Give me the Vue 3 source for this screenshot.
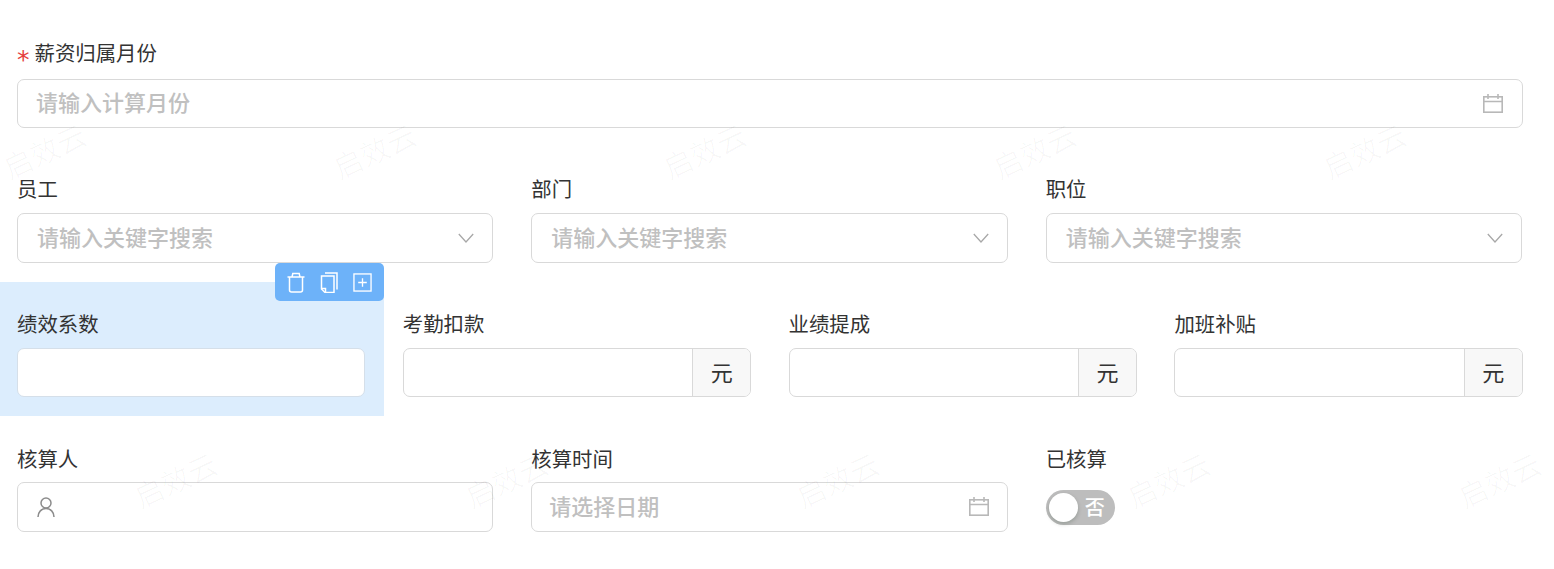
<script setup>
const watermarks = []
for (let i = 0; i < 5; i++) {
  watermarks.push({ x: 44 + i * 330, y: 150 })
  watermarks.push({ x: 175 + i * 331, y: 479 })
}

const staffFields = ['员工', '部门', '职位']
const moneyFields = ['考勤扣款', '业绩提成', '加班补贴']
</script>

<template>
  <div class="page">
    <div class="row row-month">
      <div class="field">
        <label class="label"><span class="required">*</span>薪资归属月份</label>
        <div class="control">
          <span class="placeholder ph-month">请输入计算月份</span>
          <svg class="icon-calendar" viewBox="0 0 20 19" fill="none" stroke="#b8b8b8" stroke-width="1.6">
            <rect x="0.8" y="2.8" width="18.4" height="15.4" />
            <path d="M0.8 7.500h18.400M5 0v5M15 0v5" />
          </svg>
        </div>
      </div>
    </div>

    <div class="row cols-3 row-staff">
      <div v-for="name in staffFields" :key="name" class="field">
        <label class="label">{{ name }}</label>
        <div class="control tall">
          <span class="placeholder ph-select">请输入关键字搜索</span>
          <svg class="icon-chevron" viewBox="0 0 16 10" fill="none" stroke="#a8a8a8" stroke-width="1.3">
            <path d="M0.8 1l7.2 8 7.2-8" />
          </svg>
        </div>
      </div>
    </div>

    <div class="row cols-4 row-money">
      <div class="field selected">
        <div class="toolbar">
          <svg viewBox="0 0 18 20" fill="none" stroke="#fff" stroke-width="1.5">
            <path d="M0.500 4.500h17M5 4.500l.8-3.500h6.400l.8 3.500M2.500 4.500v13a2 2 0 0 0 2 2h9a2 2 0 0 0 2-2v-13" />
          </svg>
          <svg viewBox="0 0 18 21" fill="none" stroke="#fff" stroke-width="1.5">
            <path d="M5 1h12v16.500M1.500 4h12.500v16.500h-9l-3.500-3.500z" />
            <path d="M1.500 16.500h4v4" />
          </svg>
          <svg class="icon-add" viewBox="0 0 20 20" fill="none" stroke="#fff" stroke-width="1.4">
            <rect x="1" y="1" width="18" height="18" />
            <path d="M10 5.500v9M5.500 10h9" />
          </svg>
        </div>
        <label class="label">绩效系数</label>
        <div class="control plain"></div>
      </div>
      <div v-for="name in moneyFields" :key="name" class="field">
        <label class="label">{{ name }}</label>
        <div class="control has-unit">
          <div class="unit">元</div>
        </div>
      </div>
    </div>

    <div class="row cols-3 row-check">
      <div class="field">
        <label class="label">核算人</label>
        <div class="control tall">
          <svg class="icon-user" viewBox="0 0 18 20" fill="none" stroke="#8c8c8c" stroke-width="1.5">
            <circle cx="9" cy="6" r="5" />
            <path d="M1 20c0-5 3.500-8.500 8-8.500s8 3.500 8 8.500" />
          </svg>
        </div>
      </div>
      <div class="field">
        <label class="label">核算时间</label>
        <div class="control tall">
          <span class="placeholder ph-date">请选择日期</span>
          <svg class="icon-calendar icon-date" viewBox="0 0 20 19" fill="none" stroke="#b8b8b8" stroke-width="1.6">
            <rect x="0.8" y="2.8" width="18.4" height="15.4" />
            <path d="M0.8 7.500h18.400M5 0v5M15 0v5" />
          </svg>
        </div>
      </div>
      <div class="field">
        <label class="label">已核算</label>
        <div class="switch">
          <span class="knob"></span>
          <span class="switch-text">否</span>
        </div>
      </div>
    </div>

    <div class="watermarks">
      <span
        v-for="(w, i) in watermarks"
        :key="i"
        class="watermark"
        :style="{ left: w.x + 'px', top: w.y + 'px' }"
      >启效云</span>
    </div>
  </div>
</template>

<style>
html, body {
  background: #fff;
  overflow: hidden;
}
</style>

<style scoped>
.page {
  position: relative;
  width: 1554px;
  height: 569px;
  padding: 41px 0 0 17px;
  box-sizing: border-box;
  font-family: "Noto Sans CJK SC", "Noto Sans", sans-serif;
  color: #333;
  overflow: hidden;
}

.row {
  display: grid;
  column-gap: 38px;
  width: 1506px;
}
.cols-3 {
  grid-template-columns: repeat(3, 1fr);
  width: 1505px;
}
.cols-4 {
  grid-template-columns: repeat(4, 1fr);
  column-gap: 37.35px;
  width: 1505.85px;
}

.row-month { height: 107px; }
.row-month .label { margin-bottom: 16px; }
.row-staff { height: 134px; padding-top: 29px; box-sizing: border-box; }
.row-staff .label { margin-bottom: 14px; }
.row-money { height: 134px; }
.row-check { height: 134px; padding-top: 31px; box-sizing: border-box; }
.row-check .label { margin-bottom: 13px; }

.field {
  position: relative;
  min-width: 0;
}

.label {
  display: block;
  height: 22px;
  line-height: 22px;
  font-size: 20.4px;
  margin-bottom: 14px;
  white-space: nowrap;
}
.required {
  font-family: "DejaVu Sans", sans-serif;
  color: #e53e3e;
  font-size: 25px;
  line-height: 1;
  margin-right: 5px;
  vertical-align: -7px;
}

.control {
  position: relative;
  display: flex;
  align-items: center;
  height: 49px;
  box-sizing: border-box;
  border: 1px solid #d9d9d9;
  border-radius: 7px;
  background: #fff;
}
.control.tall { height: 50px; }

.placeholder {
  color: #c0c0c0;
  font-size: 22px;
  font-weight: 500;
  line-height: 1;
  padding-bottom: 5px;
  white-space: nowrap;
}
.ph-month { margin-left: 18px; }
.ph-select { margin-left: 19px; }
.ph-date { margin-left: 17px; padding-bottom: 4px; }

.icon-calendar {
  position: absolute;
  right: 19px;
  top: 14px;
  width: 20px;
  height: 19px;
}
.icon-date { right: 18px; }
.icon-chevron {
  position: absolute;
  right: 18px;
  top: 19px;
  width: 16px;
  height: 10px;
}
.icon-user {
  margin-left: 19px;
  width: 18px;
  height: 20px;
}

.selected {
  margin: 0 -19px 0 -17px;
  padding: 30px 19px 19px 17px;
  height: 134px;
  box-sizing: border-box;
  background: #dcedfd;
}
.control.plain { border-color: #d5dfe9; }

.toolbar {
  position: absolute;
  top: -19px;
  right: 0;
  display: flex;
  align-items: center;
  gap: 15px;
  width: 109px;
  height: 38px;
  padding-left: 12px;
  box-sizing: border-box;
  background: #6db2f9;
  border-radius: 5px;
}
.toolbar svg {
  width: 18px;
  height: 21px;
  flex: none;
}
.toolbar .icon-add {
  width: 19px;
  height: 19px;
}

.row-money .field:not(.selected) {
  padding-top: 30px;
}

.has-unit {
  justify-content: flex-end;
}
.unit {
  width: 58px;
  height: 100%;
  box-sizing: border-box;
  border-left: 1px solid #d9d9d9;
  border-radius: 0 6px 6px 0;
  background: #f8f8f8;
  text-align: center;
  line-height: 44px;
  font-size: 22px;
  color: #333;
}

.switch {
  position: relative;
  margin-top: 21px;
  width: 69px;
  height: 35px;
  border-radius: 18px;
  background: #bdbdbd;
}
.knob {
  position: absolute;
  left: 3px;
  top: 3px;
  width: 29px;
  height: 29px;
  border-radius: 50%;
  background: #fff;
  box-shadow: 0 2px 4px rgba(0, 35, 11, 0.2);
}
.switch-text {
  position: absolute;
  left: 39px;
  top: 0;
  line-height: 33px;
  font-size: 20px;
  font-weight: 500;
  color: #fff;
}

.watermarks {
  position: absolute;
  inset: 0;
  pointer-events: none;
}
.watermark {
  position: absolute;
  transform: translate(-50%, -50%) rotate(-25deg);
  font-size: 29px;
  line-height: 1;
  color: rgba(0, 0, 0, 0.028);
  white-space: nowrap;
}
</style>
